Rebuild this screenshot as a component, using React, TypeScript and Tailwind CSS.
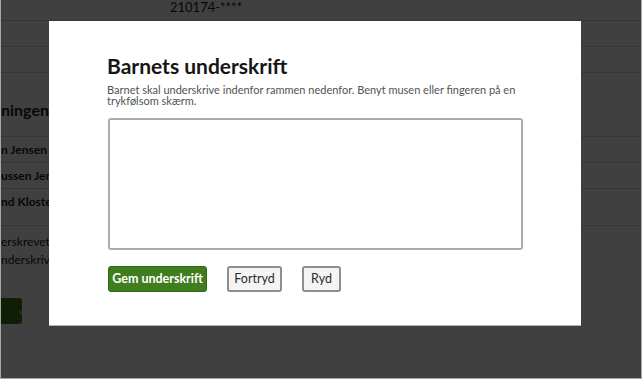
import React from "react";

// Rows of the page that sits behind the signature dialog
const topRows = [{ text: "210174-****" }, { text: "" }, { text: "" }];

const personRows = [
  { name: "n Jensen", h: "h-[26px]" },
  { name: "ussen Jen", h: "h-[26px]" },
  { name: "nd Kloster-", h: "h-[37px]" },
];

const SignatureDialog: React.FC = () => {
  return (
    <div className="ml-[48px] mt-[21px] h-[304px] w-[532px] bg-white pl-[58px] pr-[59px] pt-[32px] shadow-[0_1px_0_0_#b5b5b5]">
      <h2 className="text-[21px] leading-[26px] font-bold text-[#161616]">
        Barnets underskrift
      </h2>
      <p className="mt-[5px] text-[11px] leading-[11px] text-[#525252]">
        Barnet skal underskrive indenfor rammen nedenfor. Benyt musen eller fingeren på en trykfølsom skærm.
      </p>

      {/* signature pad */}
      <div className="mt-[12px] ml-[1px] h-[132px] w-[415px] rounded-[3px] border-2 border-[#ababab] bg-white" />

      <div className="mt-[16px] ml-[1px] flex items-center gap-[20px]">
        <button className="h-[26px] w-[99px] rounded-[3px] border border-[#2f6614] bg-[#3f7d1f] text-[12.5px] font-bold text-white">
          Gem underskrift
        </button>
        <button className="h-[26px] w-[55px] rounded-[3px] border-2 border-[#8e8e8e] bg-[#f4f4f4] text-[12.5px] text-[#2b2b2b]">
          Fortryd
        </button>
        <button className="h-[26px] w-[39px] rounded-[3px] border-2 border-[#8e8e8e] bg-[#f4f4f4] text-[12.5px] text-[#2b2b2b]">
          Ryd
        </button>
      </div>
    </div>
  );
};

export default function App() {
  return (
    <div className="h-[392px] w-[644px] bg-white" style={{ fontFamily: 'Lato, "Noto Sans", sans-serif' }}>
      <div className="relative h-[379px] w-[642px] overflow-hidden border-x border-b border-[#a6a6a6] bg-white">
        {/* page content (under the overlay) */}
        <div className="text-[#1c1c1c]">
          {topRows.map((r, i) => (
            <div key={i} className="h-[26px] border-b border-[#d8d8d8] first:h-[21px]">
              {r.text && (
                <span className="block pl-[169px] pt-[1px] text-[13px] leading-[12px]">{r.text}</span>
              )}
            </div>
          ))}
          <div className="flex h-[63px] items-center pt-[10px] text-[16px] font-bold">ningen</div>
          <div className="border-t border-[#d8d8d8]">
            {personRows.map((p) => (
              <div key={p.name} className={`${p.h} border-b border-[#d8d8d8] pt-[4px] text-[12px] font-bold leading-[18px]`}>
                {p.name}
              </div>
            ))}
          </div>
          <div className="mt-[7px] text-[12px] leading-[18px]">
            <div>erskrevet, s</div>
            <div>nderskrivn</div>
          </div>
          <div className="mt-[29px] flex h-[26px] w-[21px] items-center justify-end rounded-r-[3px] bg-[#3f7d1f] text-[10px] text-white">
            ›
          </div>
        </div>

        {/* dimmed overlay with dialog */}
        <div className="absolute inset-0 bg-black/75">
          <SignatureDialog />
        </div>
      </div>
    </div>
  );
}
